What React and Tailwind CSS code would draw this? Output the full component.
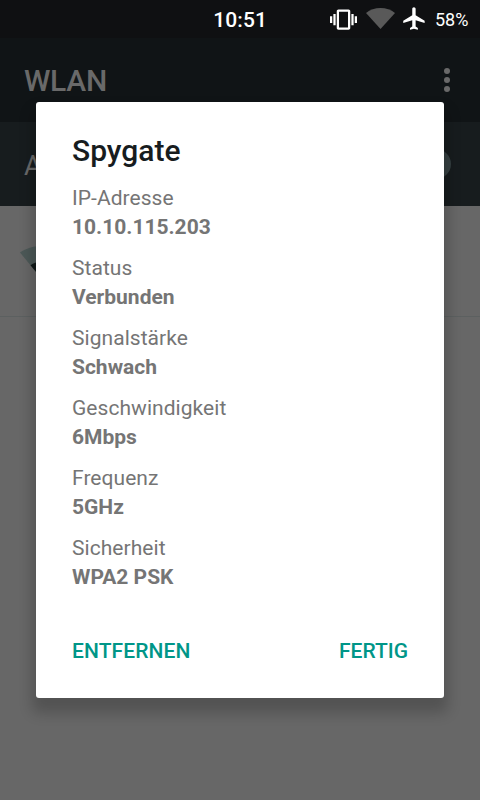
const details = [
  { label: "IP-Adresse", value: "10.10.115.203" },
  { label: "Status", value: "Verbunden" },
  { label: "Signalstärke", value: "Schwach" },
  { label: "Geschwindigkeit", value: "6Mbps" },
  { label: "Frequenz", value: "5GHz" },
  { label: "Sicherheit", value: "WPA2 PSK" },
];

function StatusBar() {
  return (
    <div className="h-[38px] shrink-0 bg-[#0f1012] flex items-center justify-end pr-3 text-white">
      <span className="text-[21px] leading-[24px] font-medium mr-[63px] mt-0.5 tracking-[0.1px]">
        10:51
      </span>
      <svg className="w-[27px] h-[27px] mt-px" viewBox="0 0 24 24" fill="currentColor">
        <path d="M0 15h2V9H0v6zm3 2h2V7H3v10zm19-8v6h2V9h-2zm-3 8h2V7h-2v10zM16.5 3h-9C6.67 3 6 3.67 6 4.5v15c0 .83.67 1.5 1.5 1.5h9c.83 0 1.5-.67 1.5-1.5v-15c0-.83-.67-1.5-1.5-1.5zM16 19H8V5h8v14z" />
      </svg>
      <svg className="w-[29px] h-[21px] ml-[9px] -mt-px" viewBox="0 0 29 21" fill="#595959">
        <path d="M14.5 21L0 4.9C4 1.8 9 0 14.5 0S25 1.8 29 4.9L14.5 21z" />
      </svg>
      <svg className="w-[27px] h-[27px] ml-1.5 -mt-px" viewBox="0 0 24 24" fill="currentColor">
        <path d="M21 16v-2l-8-5V3.5c0-.83-.67-1.5-1.5-1.5S10 2.67 10 3.5V9l-8 5v2l8-2.5V19l-2 1.5V22l3.5-1 3.5 1v-1.5L13 19v-5.5l8 2.5z" />
      </svg>
      <span className="text-[18px] leading-[24px] w-[33px] ml-[7px] mt-0.5">58%</span>
    </div>
  );
}

function WlanScreen() {
  return (
    <div className="flex-1 flex flex-col">
      <div className="h-[84px] bg-[#101416] flex items-center justify-between pl-6 pr-[30px] text-[#696969]">
        <h1 className="text-[30px] leading-[36px] font-medium mt-0.5 tracking-[-0.3px]">WLAN</h1>
        <svg className="w-1.5 h-6" viewBox="0 0 6 24" fill="currentColor">
          <circle cx="3" cy="3" r="3" />
          <circle cx="3" cy="12" r="3" />
          <circle cx="3" cy="21" r="3" />
        </svg>
      </div>
      <div className="h-[84px] bg-[#171c1e] flex items-center justify-between pl-6 pr-[29px] text-[#696969]">
        <span className="text-[27px] leading-[32px] mt-[3px]">An</span>
        <span className="size-[30px] rounded-full bg-[#364042]" />
      </div>
      <div className="h-[111px] border-b border-[#5c6060] flex items-start pl-5 pt-10">
        <svg className="w-[42px] h-[32px]" viewBox="0 0 42 32">
          <path d="M21 32L0 6.5C6 2.4 13 0 21 0s15 2.4 21 6.500L21 32z" fill="#4c5857" />
          <path d="M21 32L10.500 19.250c3-2.300 6.500-3.500 10.500-3.500s7.500 1.200 10.500 3.500L21 32z" fill="#101918" />
        </svg>
      </div>
    </div>
  );
}

function NetworkDialog() {
  return (
    <div className="absolute left-9 top-[102px] w-[408px] h-[596px] bg-white rounded-[3px] shadow-[0_11px_14px_4px_rgba(0,0,0,0.2)] px-9 pt-[31px] pb-[29px] flex flex-col">
      <h2 className="text-[30px] leading-[36px] font-medium text-[#171c1e]">
        Spygate
      </h2>
      <dl className="mt-[15px] flex flex-col gap-3 text-[21px] leading-[29px] text-[#757575]">
        {details.map((item) => (
          <div key={item.label}>
            <dt className="tracking-[0.05px]">{item.label}</dt>
            <dd className="font-bold">{item.value}</dd>
          </div>
        ))}
      </dl>
      <div className="mt-auto flex justify-between text-[21px] leading-[36px] font-medium text-[#009688]">
        <button className="tracking-[0.1px]">ENTFERNEN</button>
        <button>FERTIG</button>
      </div>
    </div>
  );
}

export default function App() {
  return (
    <div className="relative w-[480px] h-[800px] overflow-hidden bg-[#676767] flex flex-col font-[Roboto,sans-serif]">
      <StatusBar />
      <WlanScreen />
      <NetworkDialog />
    </div>
  );
}
